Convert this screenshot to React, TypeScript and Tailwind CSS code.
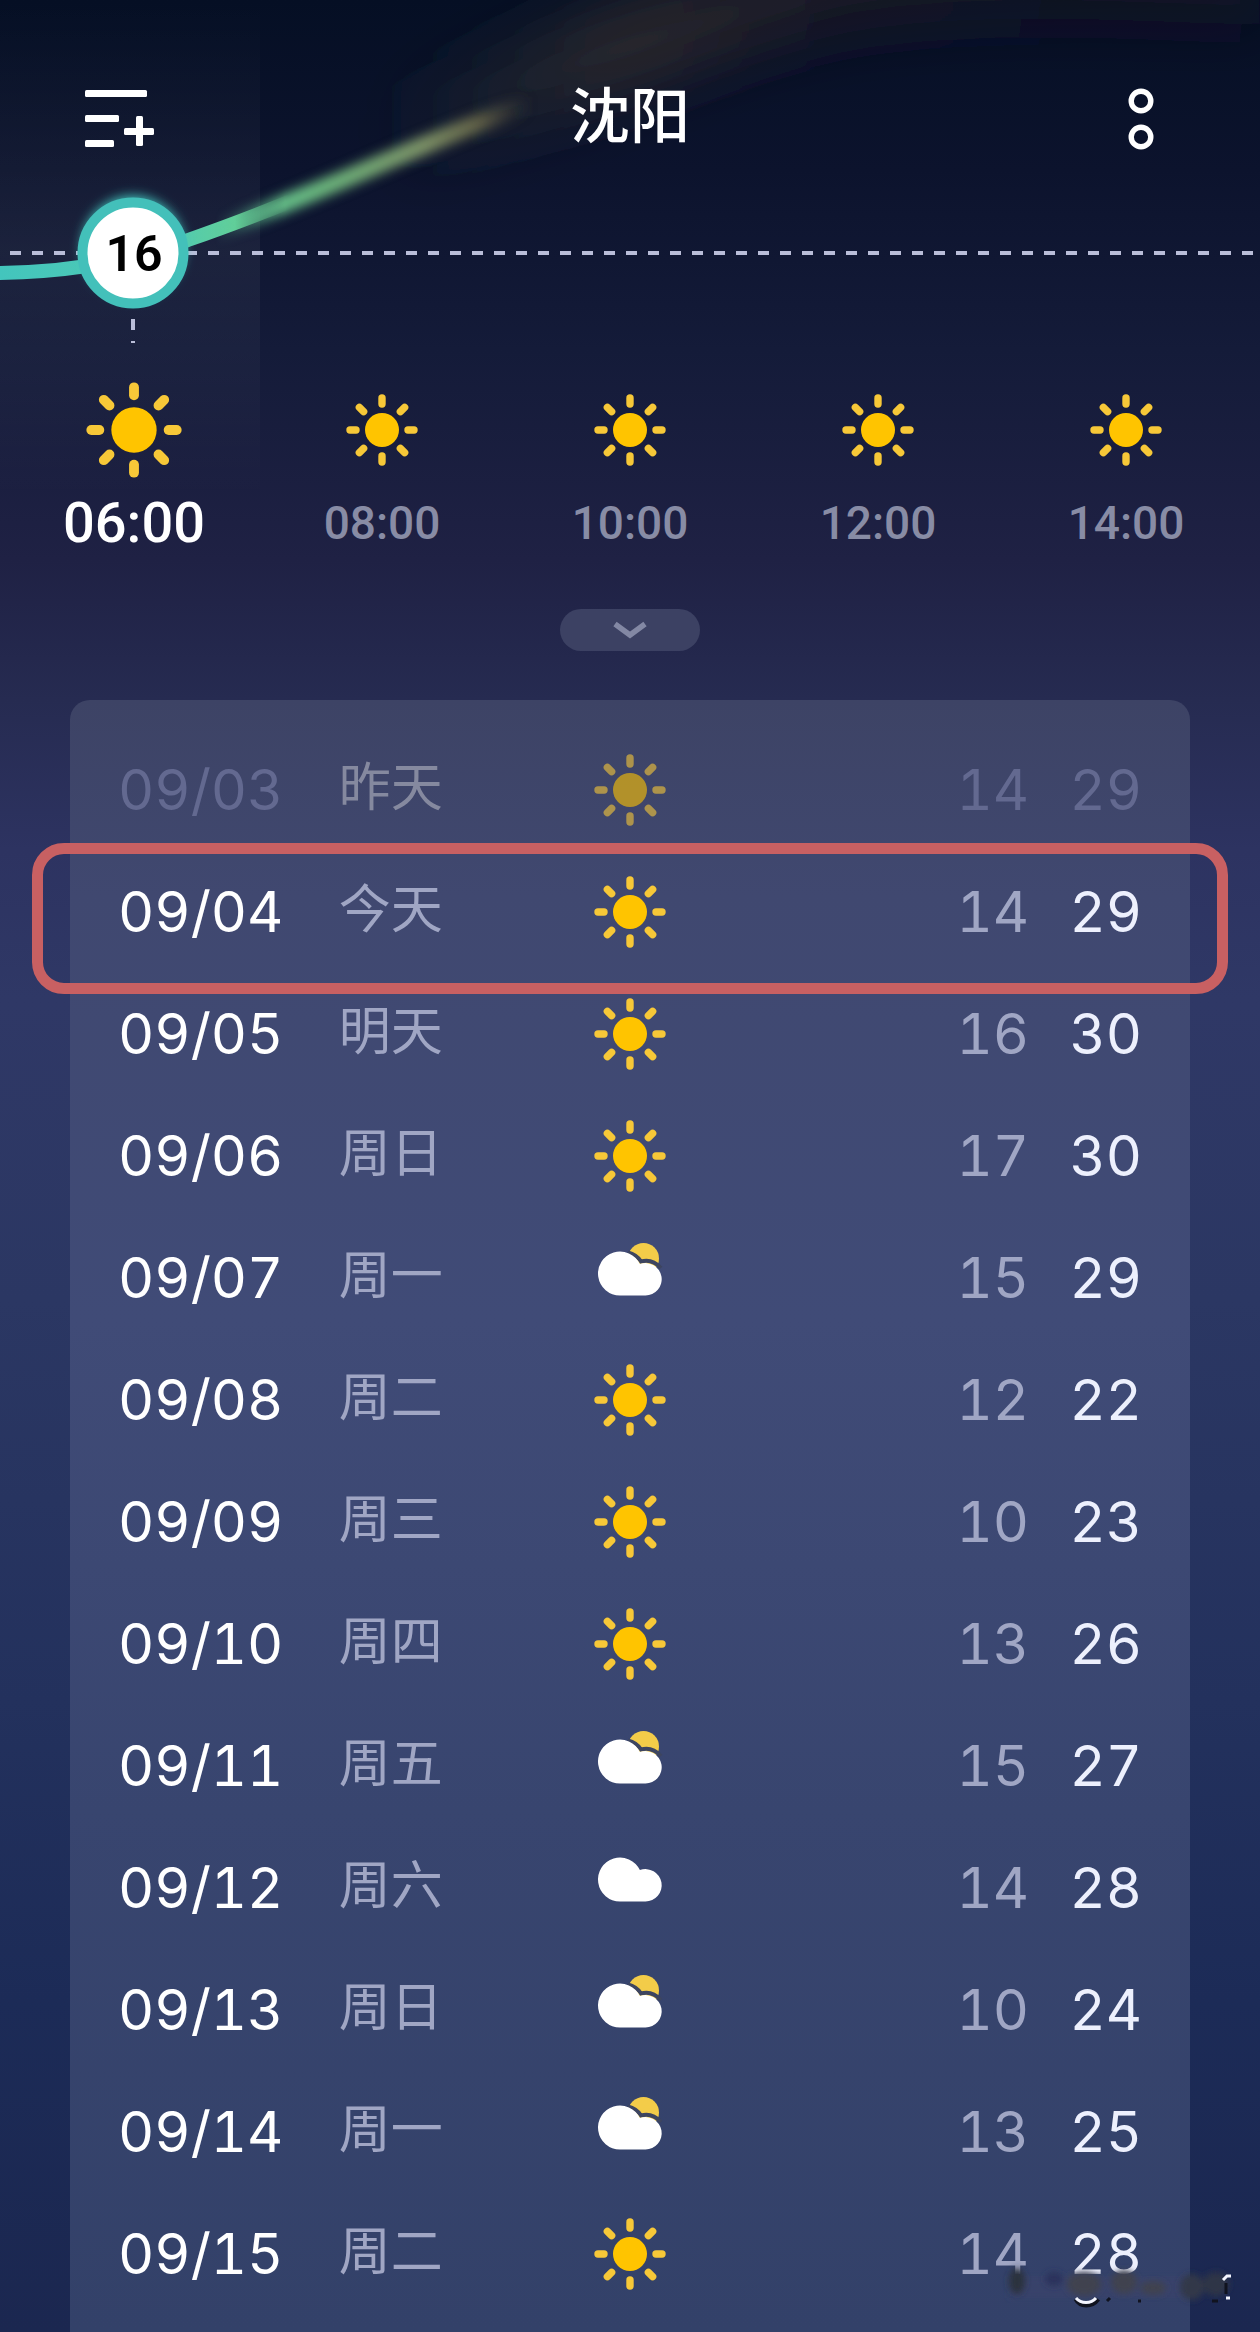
type Sky = 'sun' | 'partly' | 'cloud';

const hours = ['06:00', '08:00', '10:00', '12:00', '14:00'];

const days: { date: string; day: string; sky: Sky; low: number; high: number }[] = [
  { date: '09/03', day: '昨天', sky: 'sun', low: 14, high: 29 },
  { date: '09/04', day: '今天', sky: 'sun', low: 14, high: 29 },
  { date: '09/05', day: '明天', sky: 'sun', low: 16, high: 30 },
  { date: '09/06', day: '周日', sky: 'sun', low: 17, high: 30 },
  { date: '09/07', day: '周一', sky: 'partly', low: 15, high: 29 },
  { date: '09/08', day: '周二', sky: 'sun', low: 12, high: 22 },
  { date: '09/09', day: '周三', sky: 'sun', low: 10, high: 23 },
  { date: '09/10', day: '周四', sky: 'sun', low: 13, high: 26 },
  { date: '09/11', day: '周五', sky: 'partly', low: 15, high: 27 },
  { date: '09/12', day: '周六', sky: 'cloud', low: 14, high: 28 },
  { date: '09/13', day: '周日', sky: 'partly', low: 10, high: 24 },
  { date: '09/14', day: '周一', sky: 'partly', low: 13, high: 25 },
  { date: '09/15', day: '周二', sky: 'sun', low: 14, high: 28 },
];

const SunIcon = ({ className }: { className: string }) => (
  <svg viewBox="0 0 72 72" className={className} role="img" aria-label="晴">
    <circle cx="36" cy="36" r="17" fill="#ffc400" />
    <g stroke="#f7c838" strokeWidth="7.4" strokeLinecap="round">
      {[0, 45, 90, 135, 180, 225, 270, 315].map((angle) => (
        <line key={angle} x1="36" y1="4" x2="36" y2="10" transform={`rotate(${angle} 36 36)`} />
      ))}
    </g>
  </svg>
);

const cloudPath = 'M26 53.5A22 22 0 1 1 45.9 22.1A16.2 16.2 0 1 1 51.3 53.5Z';

const PartlyIcon = () => (
  <svg viewBox="0 0 72 72" className="size-[72px]" role="img" aria-label="多云">
    <circle cx="49.5" cy="16.5" r="15.5" fill="#f3cc49" />
    {/* Thin gap between the sun and the cloud */}
    <path d="M34 10.5C40 12 45 16.5 47 19.5C54 17.5 61 19.5 67 26" fill="none" stroke="#3d4560" strokeWidth="4" />
    <path d={cloudPath} fill="#fff" />
  </svg>
);

const CloudIcon = () => (
  <svg viewBox="0 4 72 72" className="size-[72px]" role="img" aria-label="阴">
    <path d={cloudPath} fill="#fff" />
  </svg>
);

const SkyIcon = ({ sky }: { sky: Sky }) => {
  if (sky === 'partly') return <PartlyIcon />;
  if (sky === 'cloud') return <CloudIcon />;
  return <SunIcon className="size-[72px]" />;
};

const Header = () => (
  <header className="relative grid h-[198px] grid-cols-[1fr_auto_1fr] items-start px-[85px] pt-[76px]">
    <button type="button" aria-label="城市列表" className="justify-self-start pt-3.5">
      <svg width="70" height="58" viewBox="0 0 70 58" fill="#fff">
        <rect x="0" y="0" width="62" height="7" rx="1.5" />
        <rect x="0" y="25" width="34" height="7" rx="1.5" />
        <rect x="0" y="50" width="29" height="7" rx="1.5" />
        <rect x="39" y="38" width="30" height="7" rx="1.5" />
        <rect x="51" y="26" width="7" height="30" rx="1.5" />
      </svg>
    </button>
    <h1 className="text-[60px] leading-[84px] font-medium text-white">沈阳</h1>
    <button type="button" aria-label="更多" className="justify-self-end pt-3 pr-2.5">
      <svg width="48" height="62" viewBox="0 0 48 62" fill="none" stroke="#fff" strokeWidth="5.4">
        <circle cx="24" cy="13" r="9.8" />
        <circle cx="24" cy="49" r="9.8" />
      </svg>
    </button>
  </header>
);

const curvePath = 'M-10 273C60 273 130 262 188 240C240 222 290 202 340 181C400 156 450 132 540 100';

const TemperatureCurve = () => (
  <svg
    className="pointer-events-none absolute top-0 left-0 h-[360px] w-[1260px]"
    viewBox="0 0 1260 360"
    aria-hidden="true"
  >
    <defs>
      <linearGradient id="curve" gradientUnits="userSpaceOnUse" x1="0" y1="0" x2="530" y2="0">
        <stop offset="0" stopColor="#43c5bd" />
        <stop offset="0.33" stopColor="#52cbb0" />
        <stop offset="0.45" stopColor="#62cf98" />
        <stop offset="0.62" stopColor="#6db67c" />
        <stop offset="0.8" stopColor="#7f9468" />
        <stop offset="0.9" stopColor="#77754f" stopOpacity="0.8" />
        <stop offset="1" stopColor="#5b5443" stopOpacity="0" />
      </linearGradient>
      <linearGradient id="haze" gradientUnits="userSpaceOnUse" x1="380" y1="0" x2="1260" y2="0">
        <stop offset="0" stopColor="#2a3633" stopOpacity="0" />
        <stop offset="0.28" stopColor="#342e2f" stopOpacity="0.8" />
        <stop offset="0.55" stopColor="#241d26" stopOpacity="0.6" />
        <stop offset="1" stopColor="#241a26" stopOpacity="0.4" />
      </linearGradient>
      <linearGradient id="fadeIn" gradientUnits="userSpaceOnUse" x1="215" y1="0" x2="285" y2="0">
        <stop offset="0" stopColor="#000" />
        <stop offset="1" stopColor="#fff" />
      </linearGradient>
      <linearGradient id="fadeOut" gradientUnits="userSpaceOnUse" x1="235" y1="0" x2="290" y2="0">
        <stop offset="0" stopColor="#fff" />
        <stop offset="1" stopColor="#000" />
      </linearGradient>
      <mask id="near" maskUnits="userSpaceOnUse" x="0" y="0" width="1260" height="360">
        <rect width="1260" height="360" fill="url(#fadeOut)" />
      </mask>
      <mask id="far" maskUnits="userSpaceOnUse" x="0" y="0" width="1260" height="360">
        <rect width="1260" height="360" fill="url(#fadeIn)" />
      </mask>
      <filter id="soft" x="-20%" y="-50%" width="140%" height="200%">
        <feGaussianBlur stdDeviation="6" />
      </filter>
      <filter id="softer" x="-20%" y="-100%" width="140%" height="300%">
        <feGaussianBlur stdDeviation="28" />
      </filter>
    </defs>
    <path
      d="M380 140C480 100 600 50 760 5S1100 -25 1260 -20"
      fill="none"
      stroke="url(#haze)"
      strokeWidth="90"
      filter="url(#softer)"
    />
    <line x1="10" y1="253" x2="1260" y2="253" stroke="#b9bdd8" strokeWidth="4" strokeDasharray="11 11" />
    <line x1="133" y1="319" x2="133" y2="343" stroke="#b9bdd8" strokeWidth="4" strokeDasharray="11 11" />
    <g mask="url(#near)">
      <path d={curvePath} fill="none" stroke="url(#curve)" strokeWidth="14" />
    </g>
    <g mask="url(#far)">
      <path d={curvePath} fill="none" stroke="url(#curve)" strokeWidth="18" filter="url(#soft)" />
    </g>
    <circle cx="133" cy="247" r="51" fill="#43c5bd" filter="url(#soft)" />
    <circle cx="133" cy="253" r="50.5" fill="#fff" stroke="#43c0ba" strokeWidth="10" />
  </svg>
);

const HourlyForecast = () => (
  <section className="relative px-2.5">
    <div className="grid grid-cols-5">
      <span className="text-center text-[50px] leading-[112px] font-semibold text-black">16</span>
    </div>
    <ul className="grid grid-cols-5 pt-[72px]">
      {hours.map((hour, index) => (
        <li key={hour} className="flex flex-col items-center">
          <span className="flex h-24 items-center">
            <SunIcon className={index === 0 ? 'size-24' : 'size-[72px]'} />
          </span>
          <span
            className={`flex h-[90px] items-center font-medium ${
              index === 0 ? 'text-[56px] text-white' : 'text-[46px] text-[#888ca5]'
            }`}
          >
            {hour}
          </span>
        </li>
      ))}
    </ul>
    <div className="flex justify-center pt-[41px]">
      <button
        type="button"
        aria-label="展开"
        className="flex h-[42px] w-[140px] items-center justify-center rounded-full bg-[#3c4163]"
      >
        <svg width="34" height="18" viewBox="0 0 34 18" fill="none" stroke="#8388a4" strokeWidth="5.5">
          <path d="M2 3L17 14L32 3" />
        </svg>
      </button>
    </div>
  </section>
);

const DailyForecast = () => (
  <section className="relative mx-[70px] mt-[49px] flex-1 rounded-t-[20px] bg-[linear-gradient(180deg,#3d4365,#404870_12%,#404b77_38%,#38456f_68%,#334169)] pt-[29px] pb-[17px]">
    <table className="w-full table-fixed font-[Inter,'Noto_Sans_CJK_SC',sans-serif] text-[56px] leading-none tabular-nums">
      <colgroup>
        <col className="w-[24%]" />
        <col className="w-[17%]" />
        <col className="w-[18%]" />
        <col className="w-[27%]" />
        <col className="w-[14%]" />
      </colgroup>
      <tbody>
        {days.map(({ date, day, sky, low, high }, index) => {
          const past = index === 0;
          return (
            <tr key={date} className="h-[122px]">
              <th scope="row" className={`pl-12 text-left font-normal ${past ? 'text-[#636990]' : 'text-white'}`}>
                {date}
              </th>
              <td className={`pb-1 text-[52px] ${past ? 'text-[#85899f]' : 'text-[#a0a6c4]'}`}>{day}</td>
              <td className={past ? 'opacity-60' : ''}>
                <span className="flex justify-center">
                  <SkyIcon sky={sky} />
                </span>
              </td>
              <td className={`pr-1 text-right ${past ? 'text-[#636990]' : 'text-[#a0a6c4]'}`}>{low}</td>
              <td className={`pr-12 text-right ${past ? 'text-[#636990]' : 'text-[#edf0fd]'}`}>{high}</td>
            </tr>
          );
        })}
      </tbody>
    </table>
    {/* Marker around today's row */}
    <div className="pointer-events-none absolute -inset-x-[38px] top-[143px] h-[151px] rounded-[32px] border-[11px] border-[#c86062]" />
  </section>
);

const Smudge = () => (
  <svg
    className="pointer-events-none absolute right-0 bottom-0 h-[80px] w-[270px]"
    viewBox="0 0 270 80"
    aria-hidden="true"
  >
    <defs>
      <filter id="smudge" x="-20%" y="-20%" width="140%" height="140%">
        <feGaussianBlur stdDeviation="3" />
      </filter>
    </defs>
    <rect x="20" y="24" width="176" height="22" fill="#37426a" filter="url(#smudge)" />
    <g fill="#41434f" filter="url(#smudge)">
      <ellipse cx="27" cy="29" rx="8" ry="13" fill="#2c303c" />
      <ellipse cx="64" cy="27" rx="9" ry="7" fill="#2a335c" />
      <ellipse cx="94" cy="32" rx="17" ry="12" />
      <ellipse cx="134" cy="30" rx="13" ry="12" />
      <ellipse cx="163" cy="36" rx="13" ry="7" />
      <ellipse cx="202" cy="35" rx="12" ry="13" fill="#33384a" />
      <ellipse cx="226" cy="32" rx="13" ry="12" fill="#2f3547" />
    </g>
    <path d="M86 47C90 55 102 55 108 47" fill="none" stroke="#10131f" strokeWidth="5" />
    <path d="M86 46C91 52 101 52 106 46" fill="none" stroke="#f4f6ff" strokeWidth="3" />
    <path d="M233 28L237 24H241M236 46H240" fill="none" stroke="#f4f6ff" strokeWidth="3" />
    <path d="M236 31V42M222 49H228M148 49H151M117 49L120 46" fill="none" stroke="#10131f" strokeWidth="3" />
  </svg>
);

export default function App() {
  return (
    <main className="relative flex min-h-screen flex-col overflow-hidden bg-[linear-gradient(180deg,#050f24_0px,#0c132d_170px,#141b39_350px,#1f2144_560px,#262b51_700px,#2d3361_850px,#2f3866_1000px,#2b3763_1300px,#23315d_1700px,#1c2b57_2000px,#1b2750_2332px)] font-[Roboto,'Noto_Sans_CJK_SC',sans-serif]">
      {/* Lighter band behind the current hour */}
      <div className="absolute top-0 left-0 h-[500px] w-[260px] bg-[linear-gradient(180deg,transparent,rgba(255,255,255,0.05)_50%,transparent)]" />
      <TemperatureCurve />
      <Header />
      <HourlyForecast />
      <DailyForecast />
      <Smudge />
    </main>
  );
}
